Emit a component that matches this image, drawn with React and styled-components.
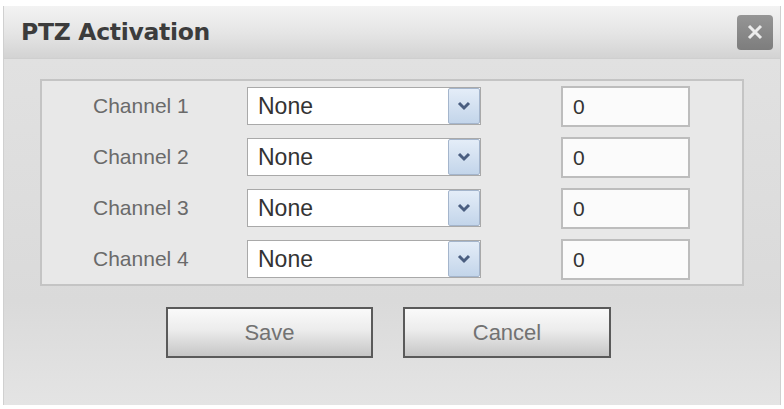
import React from 'react'
import styled, { createGlobalStyle } from 'styled-components'

const Global = createGlobalStyle`
  html, body {
    margin: 0;
    padding: 0;
    background: #ffffff;
  }
  body {
    font-family: "Liberation Sans", Arial, sans-serif;
  }
`;

const Dialog = styled.div`
  margin: 6px 3px 0 3px;
  width: 778px;
  height: 399px;
  background: #dedede;
  display: flex;
  flex-direction: column;
  box-sizing: border-box;
  border-left: 1px solid #d0d0d0;
  border-right: 1px solid #d0d0d0;
`;

const TitleBar = styled.div`
  height: 52px;
  display: flex;
  align-items: center;
  justify-content: space-between;
  padding: 0 7px 0 17px;
  background: linear-gradient(#f3f3f3, #e4e4e4 55%, #d3d3d3);
  border-bottom: 1px solid #cfcfcf;
`;

const Title = styled.div`
  font-family: "DejaVu Sans", Verdana, sans-serif;
  font-size: 23.5px;
  font-weight: bold;
  letter-spacing: -0.3px;
  color: #3c3c3c;
`;

const Close = styled.div`
  width: 36px;
  height: 35px;
  border-radius: 4px;
  background: linear-gradient(#959595, #7d7d7d);
  display: flex;
  align-items: center;
  justify-content: center;
`;

const Body = styled.div`
  flex: 1;
  padding: 20px 36px 0 36px;
  background: linear-gradient(#e1e1e1, #dadada 70%, #e4e4e4);
`;

const Panel = styled.div`
  box-sizing: border-box;
  height: 207px;
  border: 2px solid #c4c4c4;
  background: #e8e8e8;
  padding: 6px 0 0 51px;
  display: grid;
  grid-template-columns: 154px 234px 129px;
  row-gap: 13px;
  grid-auto-rows: 38px;
  align-items: center;
`;

const Label = styled.div`
  font-size: 21px;
  color: #6a6a6a;
  line-height: 38px;
`;

const Select = styled.div`
  display: flex;
  height: 38px;
  box-sizing: border-box;
  border: 1px solid #a9a9a9;
  background: #ffffff;
`;

const SelectValue = styled.div`
  flex: 1;
  padding-left: 10px;
  font-size: 23px;
  line-height: 36px;
  color: #333;
`;

const DropButton = styled.div`
  width: 32px;
  box-sizing: border-box;
  border: 1px solid #a4b5cc;
  border-radius: 2px;
  background: linear-gradient(#e4edf8, #c3d5ea);
  display: flex;
  align-items: center;
  justify-content: center;
`;

const Input = styled.div`
  margin-left: 80px;
  width: 129px;
  height: 41px;
  box-sizing: border-box;
  border: 2px solid #bdbdbd;
  background: #fbfbfb;
  font-size: 21px;
  line-height: 37px;
  padding-left: 10px;
  color: #333;
`;

const Buttons = styled.div`
  display: flex;
  gap: 30px;
  padding: 21px 0 0 126px;
`;

const Button = styled.div`
  width: ${p => p.w}px;
  height: 51px;
  box-sizing: border-box;
  border: 2px solid #5a5a5a;
  background: linear-gradient(#fafafa, #ececec 45%, #c6c6c6);
  display: flex;
  align-items: center;
  justify-content: center;
  font-size: 22px;
  color: #727272;
`;

const channels = [1, 2, 3, 4]

function Chevron() {
  return (
    <svg width="14" height="10" viewBox="0 0 14 10">
      <path d="M2 2 L7 7 L12 2" fill="none" stroke="#4a5e80" strokeWidth="3" />
    </svg>
  )
}

export default function App() {
  return (
    <>
      <Global />
      <Dialog>
        <TitleBar>
          <Title>PTZ Activation</Title>
          <Close>
            <svg width="18" height="16" viewBox="0 0 18 16">
              <path d="M3 2 L15 14 M15 2 L3 14" stroke="#ececec" strokeWidth="3" />
            </svg>
          </Close>
        </TitleBar>
        <Body>
          <Panel>
            {channels.map(n => (
              <React.Fragment key={n}>
                <Label>Channel {n}</Label>
                <Select>
                  <SelectValue>None</SelectValue>
                  <DropButton><Chevron /></DropButton>
                </Select>
                <Input>0</Input>
              </React.Fragment>
            ))}
          </Panel>
          <Buttons>
            <Button w={207}>Save</Button>
            <Button w={208}>Cancel</Button>
          </Buttons>
        </Body>
      </Dialog>
    </>
  )
}
